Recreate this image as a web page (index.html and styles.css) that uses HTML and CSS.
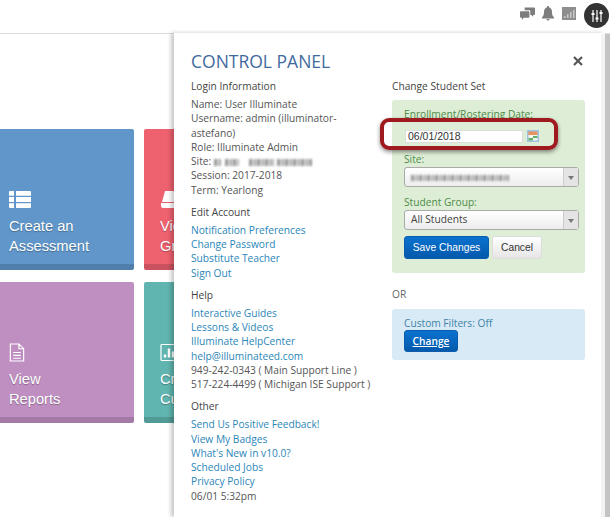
FILE: index.html
```html
<!DOCTYPE html>
<html>
<head>
<meta charset="utf-8">
<link rel="stylesheet" href="styles.css">
</head>
<body>
<header class="topbar">
  <svg class="ti ti-chat" viewBox="0 0 16 14"><path d="M5 0h10a1 1 0 0 1 1 1v6a1 1 0 0 1-1 1h-1v2l-2-2H11V4a1 1 0 0 0-1-1H5z"/><path d="M1 4h8a1 1 0 0 1 1 1v5a1 1 0 0 1-1 1H4l-2 2.500V11H1a1 1 0 0 1-1-1V5a1 1 0 0 1 1-1z"/></svg>
  <svg class="ti ti-bell" viewBox="0 0 12 15"><path d="M6 0a1 1 0 0 1 1 1.200C9 1.800 10 3.500 10 6c0 2.500.6 4 2 5.500V12.500H0v-1C1.400 10 2 8.500 2 6c0-2.500 1-4.200 3-4.800A1 1 0 0 1 6 0z"/><path d="M4.500 13h3A1.500 1.500 0 0 1 4.500 13z"/></svg>
  <svg class="ti ti-chart" viewBox="0 0 14 13"><rect width="14" height="13" fill="#8e8e8e"/><path fill="#c9c9c9" d="M2 9h1.500v2H2zM5 7h1.500v4H5zM8 5h1.500v6H8zM11 3h1.500v8H11z"/></svg>
  <span class="avatar">
    <svg viewBox="0 0 14 14"><path d="M3 1v12M7 1v12M11 1v12" stroke="#fff" stroke-width="1.200"/><path d="M1.500 4h3v2h-3zM5.500 8.500h3v2h-3zM9.500 3h3v2h-3z" fill="#fff"/></svg>
  </span>
</header>

<main class="tiles">
  <a class="tile blue">
    <svg class="tile-icon" viewBox="0 0 22 17"><path d="M0 1a1 1 0 0 1 1-1h4v4.800H0zM7 0h14a1 1 0 0 1 1 1v3.800H7zM0 6.100h5v4.800H0zM7 6.100h15v4.800H7zM0 12.200h5V17H1a1 1 0 0 1-1-1zM7 12.200h15V16a1 1 0 0 1-1 1H7z"/></svg>
    <span>Create an<br>Assessment</span>
  </a>
  <a class="tile red">
    <svg class="tile-icon" viewBox="0 0 22 17"><path d="M5 0h17l-3 11H2zM1 12h17v5H3a2 2 0 0 1-2-2z"/></svg>
    <span>View<br>Gradebook</span>
  </a>
  <a class="tile purple">
    <svg class="tile-icon outline doc" viewBox="0 0 16 20"><path d="M1 1h9l5 5v13H1zM10 1v5h5M4 10h8M4 13h8M4 16h8"/></svg>
    <span>View<br>Reports</span>
  </a>
  <a class="tile teal">
    <svg class="tile-icon outline" viewBox="0 0 22 18"><rect x="1" y="1" width="20" height="16" rx="1"/><path d="M5 14v-3M9 14V5M13 14V8M17 14V6" stroke-width="2.400"/></svg>
    <span>Create<br>Custom</span>
  </a>
</main>

<aside class="panel">
  <div class="panel-head">
    <h1>CONTROL PANEL</h1>
    <svg class="close" viewBox="0 0 10 10"><path d="M1 1l8 8M9 1l-8 8"/></svg>
  </div>
  <div class="columns">
    <div class="col-left">
      <section>
        <h2>Login Information</h2>
        <p>Name: User Illuminate</p>
        <p>Username: admin (illuminator-<br>astefano)</p>
        <p>Role: Illuminate Admin</p>
        <p class="site">Site: <span class="blur b1"></span><span class="blur b2"></span><span class="blur b3"></span><span class="blur b4"></span></p>
        <p>Session: 2017-2018</p>
        <p>Term: Yearlong</p>
      </section>
      <section>
        <h2>Edit Account</h2>
        <p><a>Notification Preferences</a></p>
        <p><a>Change Password</a></p>
        <p><a>Substitute Teacher</a></p>
        <p><a>Sign Out</a></p>
      </section>
      <section>
        <h2>Help</h2>
        <p><a>Interactive Guides</a></p>
        <p><a>Lessons &amp; Videos</a></p>
        <p><a>Illuminate HelpCenter</a></p>
        <p><a>help@illuminateed.com</a></p>
        <p>949-242-0343 ( Main Support Line )</p>
        <p>517-224-4499 ( Michigan ISE Support )</p>
      </section>
      <section>
        <h2>Other</h2>
        <p><a>Send Us Positive Feedback!</a></p>
        <p><a>View My Badges</a></p>
        <p><a>What's New in v10.0?</a></p>
        <p><a>Scheduled Jobs</a></p>
        <p><a>Privacy Policy</a></p>
        <p>06/01 5:32pm</p>
      </section>
    </div>
    <div class="col-right">
      <h2>Change Student Set</h2>
      <div class="box green">
        <label>Enrollment/Rostering Date:</label>
        <div class="date-row">
          <span class="date-input">06/01/2018</span>
          <svg class="cal" viewBox="0 0 12 12"><rect width="12" height="12" fill="#9fc3e4"/><rect x="1.500" y="1.500" width="9" height="3.500" fill="#e8935c"/><rect x="1.500" y="5" width="9" height="5.500" fill="#f2f6ee"/><path d="M6 6h4.500v2H6zM1.500 8H6v2.500H1.500z" fill="#62b06c"/></svg>
        </div>
        <label>Site:</label>
        <div class="select"><span class="sel-text"><span class="blur s1"></span></span><span class="arrow"></span></div>
        <label>Student Group:</label>
        <div class="select"><span class="sel-text">All Students</span><span class="arrow"></span></div>
        <div class="actions">
          <button class="btn primary">Save Changes</button>
          <button class="btn plain">Cancel</button>
        </div>
      </div>
      <p class="or">OR</p>
      <div class="box blue-box">
        <label>Custom Filters: Off</label>
        <button class="btn primary change">Change</button>
      </div>
    </div>
  </div>
  <div class="highlight"></div>
</aside>
<div class="scrollbar"></div>
</body>
</html>
```
FILE: styles.css
```css
* { box-sizing: border-box; }
html, body { margin: 0; height: 517px; overflow: hidden; }
body { position: relative; width: 610px; background: #fff; font-family: "Open Sans", sans-serif; color: #555; }

.topbar { height: 34px; border-bottom: 1px solid #dcdcdc; display: flex; align-items: center; justify-content: flex-end; padding-right: 1px; }
.ti { fill: #7d7d7d; display: block; margin-bottom: 6px; }
.ti-chat { width: 15px; height: 14px; margin-right: 7px; }
.ti-bell { width: 12px; height: 15px; margin-right: 8px; }
.ti-chart { width: 14px; height: 13px; margin-right: 8px; }
.avatar { width: 25px; height: 25px; border-radius: 50%; background: #333; display: flex; align-items: center; justify-content: center; margin-bottom: 2px; }
.avatar svg { width: 14px; height: 14px; }

.tiles { display: grid; grid-template-columns: 141px 141px; grid-auto-rows: 141px; column-gap: 10px; row-gap: 12px; margin: 95px 0 0 -7px; width: 300px; }
.tile { border-radius: 2px; border-bottom: 6px solid rgba(0,0,0,.15); color: #fff; font-family: "Liberation Sans", sans-serif; font-size: 14.700px; line-height: 20px; padding: 0 0 8px 16px; display: flex; flex-direction: column; justify-content: flex-end; text-shadow: 0 1px 1px rgba(0,0,0,.3); }
.tile span { white-space: nowrap; }
.tile-icon { display: block; width: 22px; height: 17px; fill: #fff; margin-bottom: 8px; }
.tile-icon.outline { fill: none; stroke: #fff; stroke-width: 1.200; height: 19px; margin-bottom: 7px; }
.tile-icon.doc { width: 16px; }
.blue { background: #6096c9; }
.red { background: #ee616f; }
.purple { background: #c08fc2; }
.teal { background: #60b5b0; }

.panel { position: absolute; left: 174px; top: 33px; width: 431px; height: 484px; background: #fff; box-shadow: -3px 0 4px rgba(0,0,0,.22); padding: 17px 20px 0 17px; }
.panel-head { display: flex; justify-content: space-between; align-items: center; height: 22px; padding-right: 2px; }
h1 { margin: 0; font-size: 17.500px; font-weight: 400; color: #3f6a9e; }
.close { width: 10px; height: 10px; fill: none; stroke: #555; stroke-width: 2.200; }
.columns { display: flex; margin-top: 7px; }
.col-left { width: 201px; }
.col-right { width: 193px; }
h2 { margin: 0 0 4px; font-size: 10.200px; line-height: 14px; font-weight: 400; color: #444; }
p { margin: 0; font-size: 10.200px; line-height: 14.250px; }
section { margin-bottom: 8px; }
a { color: #2b86b8; }

.blur { display: inline-block; height: 7px; vertical-align: -1px; filter: blur(.8px); background: repeating-linear-gradient(90deg, #999 0 3px, #d8d8d8 3px 5px, #aaa 5px 7px, #eee 7px 8px); }
.b1 { width: 7px; margin-right: 4px; }
.b2 { width: 14px; margin-right: 10px; }
.b3 { width: 25px; margin-right: 3px; }
.b4 { width: 35px; }
.s1 { width: 98px; height: 6px; }

.box { border-radius: 3px; padding: 7px 12px; }
.green { background: #deedd5; height: 173px; margin-top: 7px; }
.blue-box { background: #d8eaf6; height: 51px; }
label { display: block; font-size: 10.200px; line-height: 14px; color: #4d8c4a; }
.blue-box label { color: #3f83a8; }
.date-row { display: flex; align-items: flex-start; gap: 4px; margin: 9px 0 9px 1px; height: 13px; }
.date-input { display: block; width: 118px; height: 13px; background: #fff; border: 1px solid #ddd; font-family: "Liberation Sans", sans-serif; font-size: 10.500px; line-height: 11px; color: #333; padding-left: 2px; }
.cal { width: 12px; height: 12px; flex: none; }
.select { display: flex; height: 20px; border: 1px solid #aaa; border-radius: 3px; background: linear-gradient(#fff, #ededed); margin: 1px 0 8px; width: 175px; }
.sel-text { flex: 1; padding-left: 6px; font-size: 10.200px; line-height: 17px; color: #444; }
.arrow { width: 15px; border-left: 1px solid #ccc; position: relative; background: #e4e4e4; }
.arrow::after { content: ""; position: absolute; left: 4px; top: 8px; border: 3px solid transparent; border-top: 4px solid #777; }
.actions { display: flex; gap: 3px; margin-top: -2px; }
.btn { height: 23px; border-radius: 3px; font-family: "Liberation Sans", sans-serif; font-size: 10.300px; padding: 0; }
.primary { width: 85px; border: 1px solid #0a5cae; background: linear-gradient(#0a72cf, #0459ab); color: #fff; }
.plain { width: 50px; border: 1px solid #ddd; background: linear-gradient(#fff, #e6e6e6); color: #333; }
.change { width: 54px; height: 22px; display: block; text-decoration: underline; font-size: 10.200px; font-family: "Open Sans", sans-serif; font-weight: 600; }
.or { margin: 14px 0 8px; color: #666; }

.highlight { position: absolute; left: 206px; top: 85px; width: 178px; height: 32px; border: 4px solid #9e1a1f; border-radius: 9px; box-shadow: 0 2px 4px rgba(0,0,0,.45); }
.scrollbar { position: absolute; right: 0; top: 34px; bottom: 0; width: 9px; border-left: 4px solid #f3f3f3; background: #c4c4c4; }
```
